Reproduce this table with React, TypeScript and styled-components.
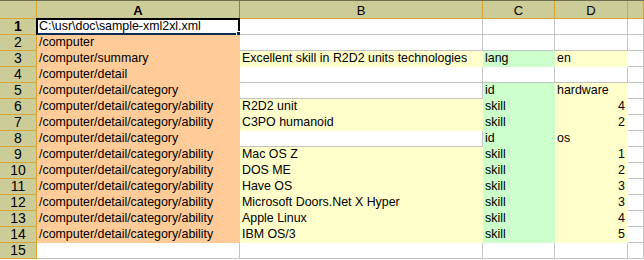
import styled, { createGlobalStyle } from 'styled-components';

type Fill = 'peach' | 'yellow' | 'green' | undefined;

const fills: Record<string, string> = {
  peach: '#ffcc99',
  yellow: '#ffffcc',
  green: '#ccffcc',
};

type CellData = { text?: string | number; fill?: Fill; right?: boolean };

const ability = '/computer/detail/category/ability';

const rows: CellData[][] = [
  [{ text: 'C:\\usr\\doc\\sample-xml2xl.xml' }, {}, {}, {}],
  [{ text: '/computer', fill: 'peach' }, {}, {}, {}],
  [
    { text: '/computer/summary', fill: 'peach' },
    { text: 'Excellent skill in R2D2 units technologies', fill: 'yellow' },
    { text: 'lang', fill: 'green' },
    { text: 'en', fill: 'yellow' },
  ],
  [{ text: '/computer/detail', fill: 'peach' }, {}, {}, {}],
  [
    { text: '/computer/detail/category', fill: 'peach' },
    {},
    { text: 'id', fill: 'green' },
    { text: 'hardware', fill: 'yellow' },
  ],
  [
    { text: ability, fill: 'peach' },
    { text: 'R2D2 unit', fill: 'yellow' },
    { text: 'skill', fill: 'green' },
    { text: 4, fill: 'yellow', right: true },
  ],
  [
    { text: ability, fill: 'peach' },
    { text: 'C3PO humanoid', fill: 'yellow' },
    { text: 'skill', fill: 'green' },
    { text: 2, fill: 'yellow', right: true },
  ],
  [
    { text: '/computer/detail/category', fill: 'peach' },
    {},
    { text: 'id', fill: 'green' },
    { text: 'os', fill: 'yellow' },
  ],
  ...([
    ['Mac OS Z', 1],
    ['DOS ME', 2],
    ['Have OS', 3],
    ['Microsoft Doors.Net X Hyper', 3],
    ['Apple Linux', 4],
    ['IBM OS/3', 5],
  ] as [string, number][]).map(([name, n]) => [
    { text: ability, fill: 'peach' as Fill },
    { text: name, fill: 'yellow' as Fill },
    { text: 'skill', fill: 'green' as Fill },
    { text: n, fill: 'yellow' as Fill, right: true },
  ]),
  [{}, {}, {}, {}],
];

const columns = ['A', 'B', 'C', 'D', ''];

const Spreadsheet = () => {
  return (
    <>
      <GlobalStyle />
      <Sheet>
        <Corner />
        {columns.map((c, i) => (
          <ColHeader key={c + i} $active={i === 0}>
            {c}
          </ColHeader>
        ))}
        {rows.map((cells, r) => (
          <Row key={r}>
            <RowHeader $active={r === 0}>{r + 1}</RowHeader>
            {cells.map((cell, c) => (
              <Cell
                key={c}
                $bg={cell.fill ? fills[cell.fill] : undefined}
                $right={cell.right}
              >
                {cell.text}
                {r === 0 && c === 0 && (
                  <Selection>
                    <FillHandle />
                  </Selection>
                )}
              </Cell>
            ))}
            <Cell />
          </Row>
        ))}
      </Sheet>
    </>
  );
};

const GlobalStyle = createGlobalStyle`
  body {
    margin: 0;
    background: #ffffff;
    font-family: "Liberation Sans", Arial, sans-serif;
  }
`;

const Sheet = styled.div`
  display: grid;
  grid-template-columns: 37px 203px 243px 72px 73px 1fr;
  grid-template-rows: 18px repeat(15, 16px);
  width: 644px;
  height: 260px;
  overflow: hidden;
  font-size: 12.4px;
  color: #000000;
  border-top: 1px solid #6f6f50;
  box-sizing: border-box;
`;

const Row = styled.div`
  display: contents;
`;

const HeaderBase = styled.div`
  box-sizing: border-box;
  background: #cccc99;
  border-right: 1px solid #d9a534;
  border-bottom: 1px solid #d9a534;
  display: flex;
  align-items: center;
  justify-content: center;
  line-height: 15px;
  font-size: 13px;
  white-space: nowrap;
  overflow: hidden;
`;

const Corner = styled(HeaderBase)``;

const ColHeader = styled(HeaderBase)<{ $active?: boolean }>`
  font-weight: ${(p) => (p.$active ? 'bold' : 'normal')};
  border-right-color: ${(p) => (p.$active ? '#a8781c' : '#d9a534')};
  padding-top: 1px;
`;

const RowHeader = styled(HeaderBase)<{ $active?: boolean }>`
  font-weight: ${(p) => (p.$active ? 'bold' : 'normal')};
  font-size: 14px;
`;

const Cell = styled.div<{ $bg?: string; $right?: boolean }>`
  position: relative;
  box-sizing: border-box;
  background: ${(p) => p.$bg ?? '#ffffff'};
  border-right: 1px solid ${(p) => p.$bg ?? '#c4c4c4'};
  border-bottom: 1px solid ${(p) => p.$bg ?? '#c4c4c4'};
  padding: 0 2px 0 2px;
  line-height: 15px;
  white-space: nowrap;
  text-align: ${(p) => (p.$right ? 'right' : 'left')};
`;

const Selection = styled.div`
  position: absolute;
  left: -1px;
  top: -1px;
  right: -1px;
  bottom: -1px;
  border: 2px solid #000000;
  border-bottom-color: #0a2a55;
  pointer-events: none;
`;

const FillHandle = styled.div`
  position: absolute;
  right: -4px;
  bottom: -4px;
  width: 5px;
  height: 5px;
  background: #0a2a55;
  outline: 1px solid #ffffff;
`;

export default Spreadsheet;
